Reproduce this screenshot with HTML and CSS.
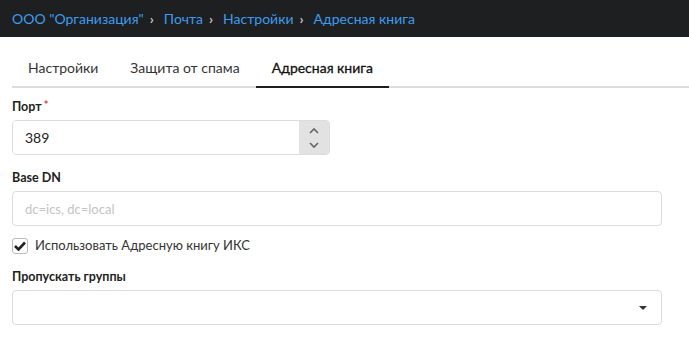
FILE: index.html
```html
<!DOCTYPE html>
<html lang="ru">
<head>
    <meta charset="UTF-8">
    <title>Адресная книга</title>
    <link rel="stylesheet" href="styles.css">
</head>
<body>
    <div class="topbar">
        <a href="#">ООО "Организация"</a>
        <span class="sep">›</span>
        <a href="#">Почта</a>
        <span class="sep">›</span>
        <a href="#">Настройки</a>
        <span class="sep">›</span>
        <a href="#">Адресная книга</a>
    </div>
    <div class="content">
        <div class="tabs">
            <div class="tab">Настройки</div>
            <div class="tab">Защита от спама</div>
            <div class="tab active">Адресная книга</div>
        </div>
        <form class="form" autocomplete="off">
            <div class="field">
                <label class="label">Порт<span class="req">*</span></label>
                <div class="number">
                    <input type="text" value="389">
                    <div class="spin">
                        <svg width="10" height="7" viewBox="0 0 10 7"><path d="M1 6 L5 2 L9 6" fill="none" stroke="#666" stroke-width="1.6"/></svg>
                        <svg width="10" height="7" viewBox="0 0 10 7"><path d="M1 1 L5 5 L9 1" fill="none" stroke="#666" stroke-width="1.6"/></svg>
                    </div>
                </div>
            </div>
            <div class="field">
                <label class="label">Base DN</label>
                <input class="text" type="text" placeholder="dc=ics, dc=local">
            </div>
            <label class="check">
                <span class="box">
                    <svg width="12" height="10" viewBox="0 0 12 10"><path d="M1 5 L4.5 8.5 L11 1.5" fill="none" stroke="#222" stroke-width="2.6"/></svg>
                </span>
                Использовать Адресную книгу ИКС
            </label>
            <div class="field">
                <label class="label">Пропускать группы</label>
                <div class="select">
                    <span class="caret"></span>
                </div>
            </div>
        </form>
    </div>
</body>
</html>
```
FILE: styles.css
```css
body {
    margin: 0;
    background: #fff;
    font-family: Lato, "Noto Sans", sans-serif;
    color: #222;
}
.topbar {
    height: 37px;
    background: #1e1f21;
    display: flex;
    align-items: center;
    padding: 0 12px;
    font-size: 14px;
}
.topbar a {
    color: #3d9cf0;
    text-decoration: none;
}
.topbar .sep {
    color: #c8c8c8;
    font-weight: bold;
    font-size: 14px;
    margin: 0 10px 0 6px;
}
.content {
    padding: 13px 0 0 12px;
}
.tabs {
    display: flex;
    border-bottom: 2px solid #dcdcdc;
}
.tab {
    padding: 9px 16px 9px 16px;
    font-size: 14px;
    line-height: 18px;
    color: #333;
    margin-bottom: -2px;
    border-bottom: 2px solid transparent;
}
.tab.active {
    border-bottom-color: #1e1e1e;
    color: #111;
    -webkit-text-stroke: 0.3px #111;
}
.form {
    width: 650px;
    padding-top: 11px;
    display: flex;
    flex-direction: column;
    gap: 15px;
}
.field {
    display: flex;
    flex-direction: column;
    gap: 5px;
}
.label {
    font-size: 12.5px;
    line-height: 16px;
    font-weight: bold;
    color: #222;
}
.req {
    color: #e53935;
    font-size: 11px;
    line-height: 11px;
    vertical-align: top;
    margin-left: 2px;
}
.number {
    width: 318px;
    height: 35px;
    box-sizing: border-box;
    display: flex;
    border: 1px solid #dcdcdc;
    border-radius: 4px;
    overflow: hidden;
}
.number input {
    flex: 1;
    min-width: 0;
    border: none;
    outline: none;
    padding: 0 12px;
    font-family: inherit;
    font-size: 14px;
    color: #222;
}
.spin {
    width: 30px;
    background: #e2e2e2;
    display: flex;
    flex-direction: column;
    align-items: center;
    justify-content: center;
    gap: 8px;
}
.text {
    height: 35px;
    box-sizing: border-box;
    border: 1px solid #dcdcdc;
    border-radius: 4px;
    padding: 0 12px;
    font-family: inherit;
    font-size: 13px;
    outline: none;
}
.text::placeholder {
    color: #c4c4c4;
}
.check {
    display: flex;
    align-items: center;
    gap: 7px;
    font-size: 13px;
    line-height: 17px;
    color: #333;
    margin-top: -4px;
}
.box {
    width: 14px;
    height: 14px;
    border: 1px solid #bbb;
    border-radius: 3px;
    display: flex;
    align-items: center;
    justify-content: center;
}
.select {
    height: 35px;
    box-sizing: border-box;
    border: 1px solid #dcdcdc;
    border-radius: 4px;
    display: flex;
    align-items: center;
    justify-content: flex-end;
    padding-right: 14px;
}
.caret {
    width: 0;
    height: 0;
    border-left: 4px solid transparent;
    border-right: 4px solid transparent;
    border-top: 4px solid #333;
}
```
